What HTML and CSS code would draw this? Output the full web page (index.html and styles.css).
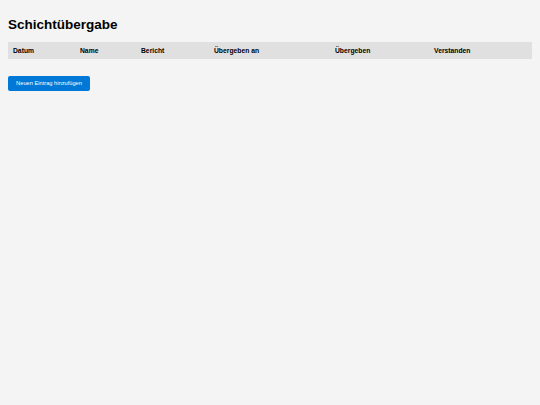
FILE: index.html
```html
<!DOCTYPE html>
<html lang="de">
<head>
<meta charset="utf-8">
<title>Schichtübergabe</title>
<link rel="stylesheet" href="styles.css">
</head>
<body>
<h1 class="title">Schichtübergabe</h1>
<table class="log">
  <colgroup>
    <col class="c-date">
    <col class="c-name">
    <col class="c-report">
    <col class="c-to">
    <col class="c-done">
    <col class="c-ack">
  </colgroup>
  <thead>
    <tr>
      <th>Datum</th>
      <th>Name</th>
      <th>Bericht</th>
      <th>Übergeben an</th>
      <th>Übergeben</th>
      <th>Verstanden</th>
    </tr>
  </thead>
  <tbody></tbody>
</table>
<button class="add-btn" type="button">Neuen Eintrag hinzufügen</button>
</body>
</html>
```
FILE: styles.css
```css
html, body {
  margin: 0;
  padding: 0;
}
body {
  background: #f4f4f4;
  font-family: "Liberation Sans", Arial, sans-serif;
  color: #000;
  padding: 8px;
}
.title {
  font-size: 13.5px;
  font-weight: bold;
  margin: 9px 0 0 0;
  line-height: 16px;
}
.log {
  margin-top: 9px;
  width: 523.5px;
  border-collapse: collapse;
  table-layout: fixed;
}
.log th {
  box-sizing: border-box;
  background: #e0e0e0;
  font-size: 6.75px;
  font-weight: bold;
  text-align: left;
  padding: 0 5px;
  height: 17px;
  line-height: 17px;
}
.c-date { width: 67px; }
.c-name { width: 61px; }
.c-report { width: 73px; }
.c-to { width: 121px; }
.c-done { width: 99px; }
.c-ack { width: 102.5px; }
.add-btn {
  display: block;
  margin-top: 17px;
  background: #0078d7;
  color: #fff;
  border: none;
  border-radius: 2px;
  font-family: "Liberation Sans", Arial, sans-serif;
  font-size: 5.7px;
  width: 82px;
  height: 14.5px;
  padding: 0;
  text-align: center;
}
```
